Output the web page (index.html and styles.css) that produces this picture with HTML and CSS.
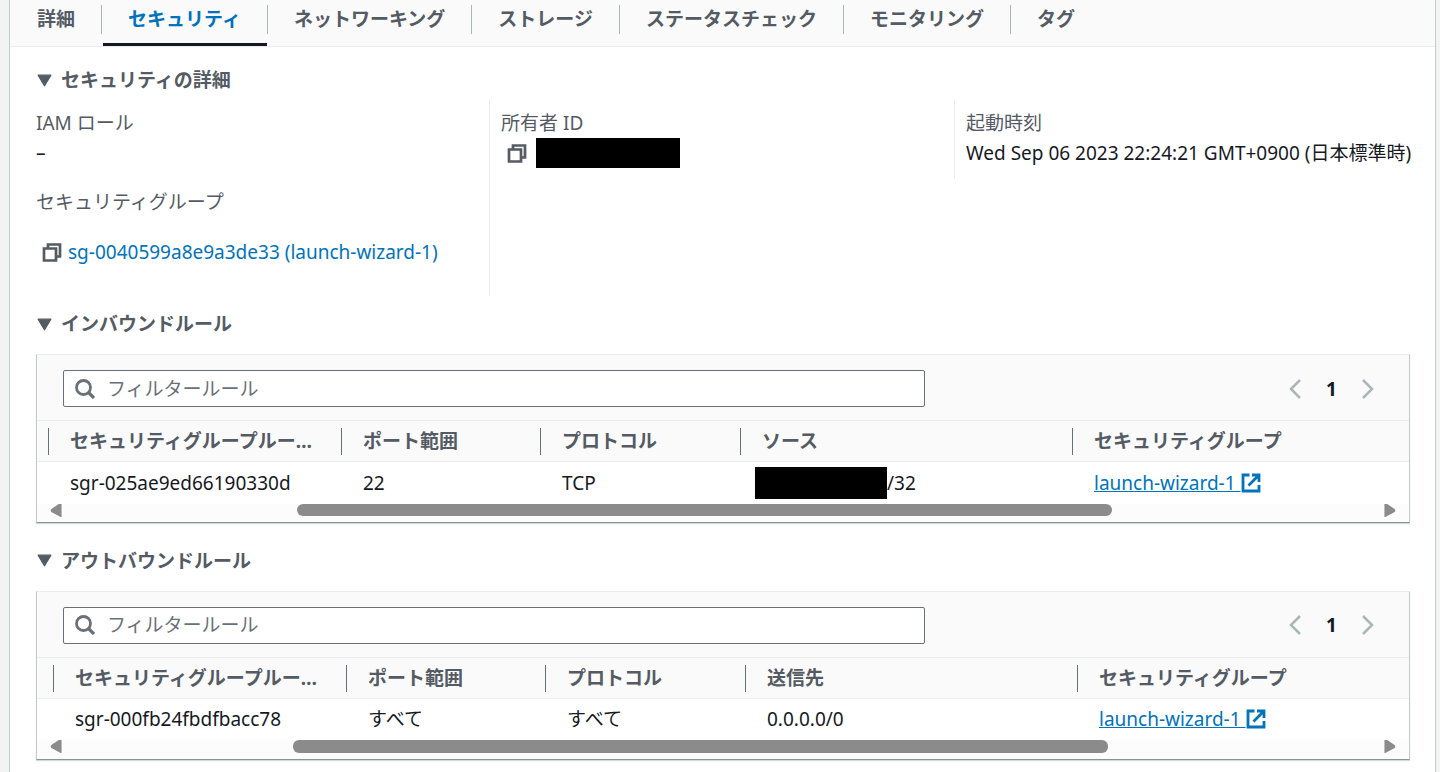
FILE: index.html
```html
<!DOCTYPE html>
<html lang="ja">
<head>
<meta charset="utf-8">
<meta name="viewport" content="width=device-width, initial-scale=1">
<title>セキュリティ</title>
<link rel="stylesheet" href="styles.css">
</head>
<body>
<svg class="sprite" aria-hidden="true">
  <symbol id="copy" viewBox="0 0 20 20"><path d="M2 6.500h12v12H2zM6 6.500V2.500h12v12h-4" fill="none" stroke="currentColor" stroke-width="2.700"/></symbol>
  <symbol id="search" viewBox="0 0 20 20"><circle cx="8.500" cy="8.500" r="7" fill="none" stroke="currentColor" stroke-width="2.800"/><path d="M13.500 13.500l5.500 5.500" stroke="currentColor" stroke-width="3.200"/></symbol>
  <symbol id="external" viewBox="0 0 20 20"><path d="M8.500 2H2v16h16V12M11 2h7V9M17.500 2.500L7.500 12.500" fill="none" stroke="currentColor" stroke-width="2.800"/></symbol>
  <symbol id="prev" viewBox="0 0 12 20"><path d="M11 1L2 10l9 9" fill="none" stroke="currentColor" stroke-width="2.500"/></symbol>
  <symbol id="next" viewBox="0 0 12 20"><path d="M1 1l9 9-9 9" fill="none" stroke="currentColor" stroke-width="2.500"/></symbol>
  <symbol id="caret" viewBox="0 0 14 12"><path d="M1 1h12L7 11z" fill="currentColor" stroke="currentColor" stroke-linejoin="round"/></symbol>
  <symbol id="left" viewBox="0 0 12 14"><path d="M12 0v14h-1L1 8.500Q-.5 7 1 5.500L9 0z" fill="currentColor"/></symbol>
  <symbol id="right" viewBox="0 0 12 14"><path d="M0 0v14h1l10-5.500q1.500-1.500 0-3L3 0z" fill="currentColor"/></symbol>
</svg>
<main class="panel">
  <nav class="tabs" role="tablist">
    <button class="tab" role="tab">詳細</button>
    <button class="tab active" role="tab" aria-selected="true">セキュリティ</button>
    <button class="tab" role="tab">ネットワーキング</button>
    <button class="tab" role="tab">ストレージ</button>
    <button class="tab" role="tab">ステータスチェック</button>
    <button class="tab" role="tab">モニタリング</button>
    <button class="tab" role="tab">タグ</button>
  </nav>
  <div class="content">
    <section>
      <h2><button class="toggle" aria-expanded="true"><svg class="caret"><use href="#caret"/></svg>セキュリティの詳細</button></h2>
      <div class="details">
        <dl class="column">
          <dt>IAM ロール</dt>
          <dd>–</dd>
          <dt class="second">セキュリティグループ</dt>
          <dd class="group"><button class="copy" aria-label="コピー"><svg class="icon"><use href="#copy"/></svg></button><a href="#">sg-0040599a8e9a3de33 (launch-wizard-1)</a></dd>
        </dl>
        <dl class="column">
          <dt>所有者 ID</dt>
          <dd class="owner"><button class="copy" aria-label="コピー"><svg class="icon"><use href="#copy"/></svg></button><span class="mask mask-owner"></span></dd>
        </dl>
        <dl class="column short">
          <dt>起動時刻</dt>
          <dd>Wed Sep 06 2023 22:24:21 GMT+0900 (日本標準時)</dd>
        </dl>
      </div>
    </section>
    <section class="rules">
      <h2><button class="toggle" aria-expanded="true"><svg class="caret"><use href="#caret"/></svg>インバウンドルール</button></h2>
      <div class="card">
        <div class="toolbar">
          <label class="search"><svg class="icon"><use href="#search"/></svg><input type="text" placeholder="フィルタールール" aria-label="フィルタールール"></label>
          <div class="pages"><button aria-label="前へ"><svg class="chevron"><use href="#prev"/></svg></button><button class="page">1</button><button aria-label="次へ"><svg class="chevron"><use href="#next"/></svg></button></div>
        </div>
        <table>
          <colgroup><col class="c-lead"><col class="c-id"><col class="c-port"><col class="c-proto"><col class="c-source"><col></colgroup>
          <thead><tr><td></td><th><span>セキュリティグループルール ID</span></th><th><span>ポート範囲</span></th><th><span>プロトコル</span></th><th><span>ソース</span></th><th><span>セキュリティグループ</span></th></tr></thead>
          <tbody><tr><td></td><td>sgr-025ae9ed66190330d</td><td>22</td><td>TCP</td><td class="masked"><div class="source"><span class="mask mask-source"></span>/32</div></td><td><a class="external" href="#">launch-wizard-1&nbsp;<svg class="icon"><use href="#external"/></svg></a></td></tr></tbody>
        </table>
        <div class="scrollbar"><svg class="arrow"><use href="#left"/></svg><div class="track"><div class="thumb"></div></div><svg class="arrow"><use href="#right"/></svg></div>
      </div>
    </section>
    <section class="rules outbound">
      <h2><button class="toggle" aria-expanded="true"><svg class="caret"><use href="#caret"/></svg>アウトバウンドルール</button></h2>
      <div class="card">
        <div class="toolbar">
          <label class="search"><svg class="icon"><use href="#search"/></svg><input type="text" placeholder="フィルタールール" aria-label="フィルタールール"></label>
          <div class="pages"><button aria-label="前へ"><svg class="chevron"><use href="#prev"/></svg></button><button class="page">1</button><button aria-label="次へ"><svg class="chevron"><use href="#next"/></svg></button></div>
        </div>
        <table>
          <colgroup><col class="c-lead"><col class="c-id"><col class="c-port"><col class="c-proto"><col class="c-source"><col></colgroup>
          <thead><tr><td></td><th><span>セキュリティグループルール ID</span></th><th><span>ポート範囲</span></th><th><span>プロトコル</span></th><th><span>送信先</span></th><th><span>セキュリティグループ</span></th></tr></thead>
          <tbody><tr><td></td><td>sgr-000fb24fbdfbacc78</td><td>すべて</td><td>すべて</td><td>0.0.0.0/0</td><td><a class="external" href="#">launch-wizard-1&nbsp;<svg class="icon"><use href="#external"/></svg></a></td></tr></tbody>
        </table>
        <div class="scrollbar"><svg class="arrow"><use href="#left"/></svg><div class="track"><div class="thumb"></div></div><svg class="arrow"><use href="#right"/></svg></div>
      </div>
    </section>
  </div>
</main>
</body>
</html>
```

FILE: styles.css
```css
* { box-sizing: border-box; }
html { overflow: hidden; }
body {
  margin: 0;
  background: #f2f3f3;
  color: #16191f;
  font: 19px/30px "Noto Sans", "Noto Sans CJK JP", sans-serif;
}
button, input { font: inherit; color: inherit; background: none; border: 0; padding: 0; margin: 0; }
a { color: #0073bb; text-decoration: none; }
svg { display: block; flex: none; }
.sprite { position: absolute; width: 0; height: 0; }
.icon { width: 20px; height: 20px; }

.panel {
  min-height: 100vh;
  margin: 0 4px 0 9px;
  background: #fff;
  border: solid #c4cbcb;
  border-width: 0 1px;
}
.tabs {
  display: flex;
  height: 47px;
  padding: 5px 0 0 1px;
  background: #fafafa;
  border-bottom: 1px solid #eaeded;
  color: #545b64;
}
.tab {
  display: flex;
  align-items: flex-start;
  height: 41px;
  font-weight: 700;
  line-height: 28px;
  padding-left: 26px;
  white-space: nowrap;
}
.tab::after { content: ""; width: 1px; height: 29px; margin-left: 26px; background: #aab7b8; }
.tab:last-child::after { display: none; }
.tab.active {
  color: #0073bb;
  background: linear-gradient(#16191f, #16191f) 1px 100% / calc(100% - 2px) 3px no-repeat;
}
.content { padding: 18px 25px 12px 26px; }
h2 { margin: 0; font-size: 19px; line-height: 30px; color: #545b64; }
.toggle { display: flex; align-items: center; gap: 9px; padding-left: 1px; font-weight: 700; }
.caret { width: 15px; height: 13px; }

.details {
  display: grid;
  grid-template-columns: repeat(3, 1fr);
  align-items: start;
  margin: 4px -9px 0 -12px;
}
.column { margin: 0; padding: 10px 0 10px 11px; border-left: 1px solid #eaeded; min-height: 80px; white-space: nowrap; }
.column:first-child { border-color: transparent; }
.column:not(.short) { align-self: stretch; }
dt { color: #545b64; line-height: 29px; }
dd { margin: 0; }
.second { margin-top: 20px; }
.group, .owner { display: flex; align-items: center; gap: 6px; padding-left: 6px; }
.group { margin: 20px 0 19px; }
.owner { gap: 9px; }
.copy { color: #545b64; }
.mask { display: block; background: #000; }
.mask-owner { width: 144px; height: 30px; }
.mask-source { width: 132px; height: 32px; }

.rules { margin-top: 13px; }
.outbound { margin-top: 23px; }
.card {
  margin-top: 15px;
  background: #fff;
  border: solid #c4cbcb;
  border-width: 0 1px 1px;
  border-top: 1px solid #eaeded;
  border-bottom-color: #879596;
  box-shadow: 0 1px 1px #d5dbdb;
  overflow: hidden;
}
.toolbar { display: flex; justify-content: space-between; gap: 40px; padding: 15px 35px 13px 26px; background: #fafafa; }
.search {
  display: flex;
  align-items: center;
  gap: 12px;
  width: 100%;
  max-width: 862px;
  height: 37px;
  padding: 0 11px;
  background: #fff;
  border: 1px solid #687078;
  border-radius: 2px;
  color: #687078;
}
.search input { flex: 1; min-width: 0; outline: 0; }
.search input::placeholder { color: #687078; opacity: 1; }
.pages { display: flex; align-items: center; gap: 24px; color: #aab7b8; }
.page { color: #16191f; font-weight: 700; width: 13px; }
.chevron { width: 12px; height: 20px; }

table { width: 100%; table-layout: fixed; border-collapse: collapse; }
.c-lead { width: 11px; }
.outbound .c-lead { width: 16px; }
.c-id { width: 293px; }
.c-port { width: 199px; }
.c-proto { width: 200px; }
.c-source { width: 332px; }
thead { background: #fafafa; border: solid #eaeded; border-width: 1px 0; color: #545b64; }
th { padding: 7px 0 6px; text-align: left; line-height: 27px; }
th span {
  display: block;
  padding: 0 25px 0 21px;
  border-left: 1px solid #687078;
  white-space: nowrap;
  overflow: hidden;
  text-overflow: ellipsis;
}
td { padding: 0; }
tbody td { height: 42px; padding-left: 22px; white-space: nowrap; }
tbody td:first-child { padding: 0; }
tbody .masked { padding-left: 15px; }
.source { display: flex; align-items: center; }
.external { display: inline-flex; align-items: center; text-decoration: underline; }

.scrollbar { display: flex; align-items: flex-start; justify-content: space-between; height: 18px; padding: 0 13px; background: #fcfcfc; color: #8b8b8b; }
.arrow { width: 12px; height: 13px; }
.track { flex: 1; padding-left: 235px; }
.thumb { width: 815px; height: 12px; border-radius: 6px; background: #8b8b8b; }
.outbound .track { padding-left: 231px; }
.outbound .scrollbar { height: 19px; }
.outbound .thumb { height: 13px; }
```
